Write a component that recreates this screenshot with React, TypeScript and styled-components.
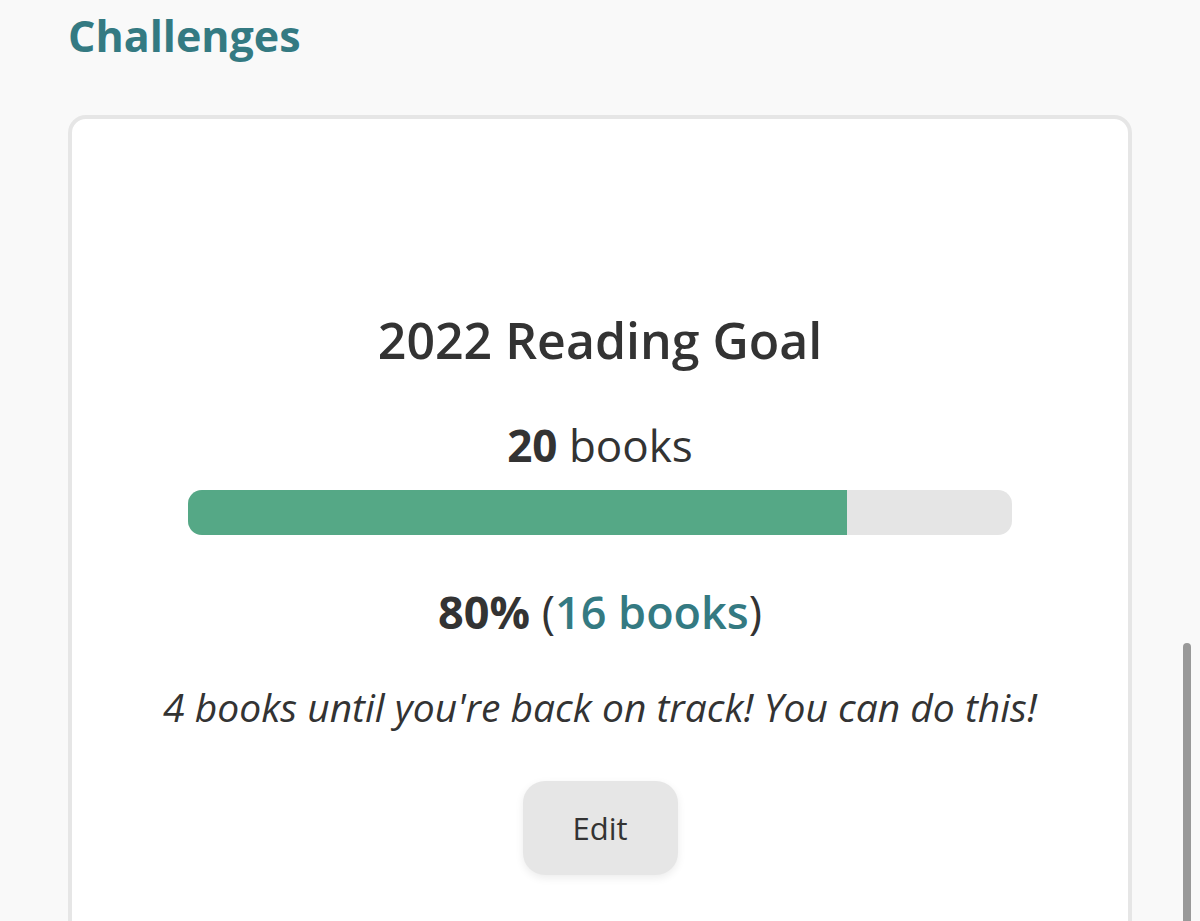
import styled, { createGlobalStyle } from "styled-components";

const GlobalStyle = createGlobalStyle`
  html, body {
    margin: 0;
    padding: 0;
    background: #f9f9f9;
    font-family: "Open Sans", "Noto Sans", sans-serif;
    color: #333;
  }
  * {
    box-sizing: border-box;
  }
`;

const goal = { year: 2022, total: 20, read: 16 };

export default function App() {
  const percent = Math.round((goal.read / goal.total) * 100);
  return (
    <>
      <GlobalStyle />
      <Page>
        <Title>Challenges</Title>
        <Card>
          <GoalTitle>{goal.year} Reading Goal</GoalTitle>
          <GoalCount>
            <strong>{goal.total}</strong> books
          </GoalCount>
          <Track>
            <Fill style={{ width: `${percent}%` }} />
          </Track>
          <Progress>
            <strong>{percent}%</strong> (<BooksLink>{goal.read} books</BooksLink>)
          </Progress>
          <Hint>
            {goal.total - goal.read} books until you're back on track! You can do this!
          </Hint>
          <EditButton>Edit</EditButton>
        </Card>
      </Page>
      <ScrollThumb />
    </>
  );
}

const Page = styled.div`
  height: 921px;
  overflow: hidden;
  padding: 6px 68px 0 68px;
`;

const Title = styled.h1`
  margin: 0;
  font-size: 43px;
  font-weight: 700;
  line-height: 60px;
  color: #347a82;
`;

const Card = styled.section`
  margin-top: 49px;
  width: 1064px;
  min-height: 900px;
  background: #fff;
  border: 4px solid #e6e6e6;
  border-radius: 18px;
  padding: 189px 40px 0;
  display: flex;
  flex-direction: column;
  align-items: center;
`;

const GoalTitle = styled.h2`
  margin: 0;
  font-size: 50px;
  font-weight: 600;
  line-height: 64px;
`;

const GoalCount = styled.div`
  margin-top: 45px;
  font-size: 44px;
  line-height: 56px;
  strong {
    font-weight: 700;
  }
`;

const Track = styled.div`
  margin-top: 17px;
  width: 824px;
  height: 45px;
  border-radius: 14px;
  background: #e5e5e5;
  overflow: hidden;
`;

const Fill = styled.div`
  height: 100%;
  background: #55a886;
`;

const Progress = styled.div`
  margin-top: 47px;
  font-size: 45px;
  line-height: 60px;
  strong {
    font-weight: 700;
  }
`;

const BooksLink = styled.span`
  color: #347a82;
  font-weight: 600;
`;

const Hint = styled.p`
  margin: 39px 0 0;
  font-size: 39px;
  font-style: italic;
  line-height: 52px;
  white-space: nowrap;
`;

const EditButton = styled.button`
  margin-top: 48px;
  width: 155px;
  height: 94px;
  border: none;
  border-radius: 22px;
  background: #e6e6e6;
  box-shadow: 0 3px 8px rgba(0, 0, 0, 0.08);
  font-family: "Open Sans", sans-serif;
  font-size: 31px;
  color: #333;
`;

const ScrollThumb = styled.div`
  position: fixed;
  right: 9px;
  top: 643px;
  width: 8px;
  height: 300px;
  border-radius: 4px;
  background: #999;
`;
